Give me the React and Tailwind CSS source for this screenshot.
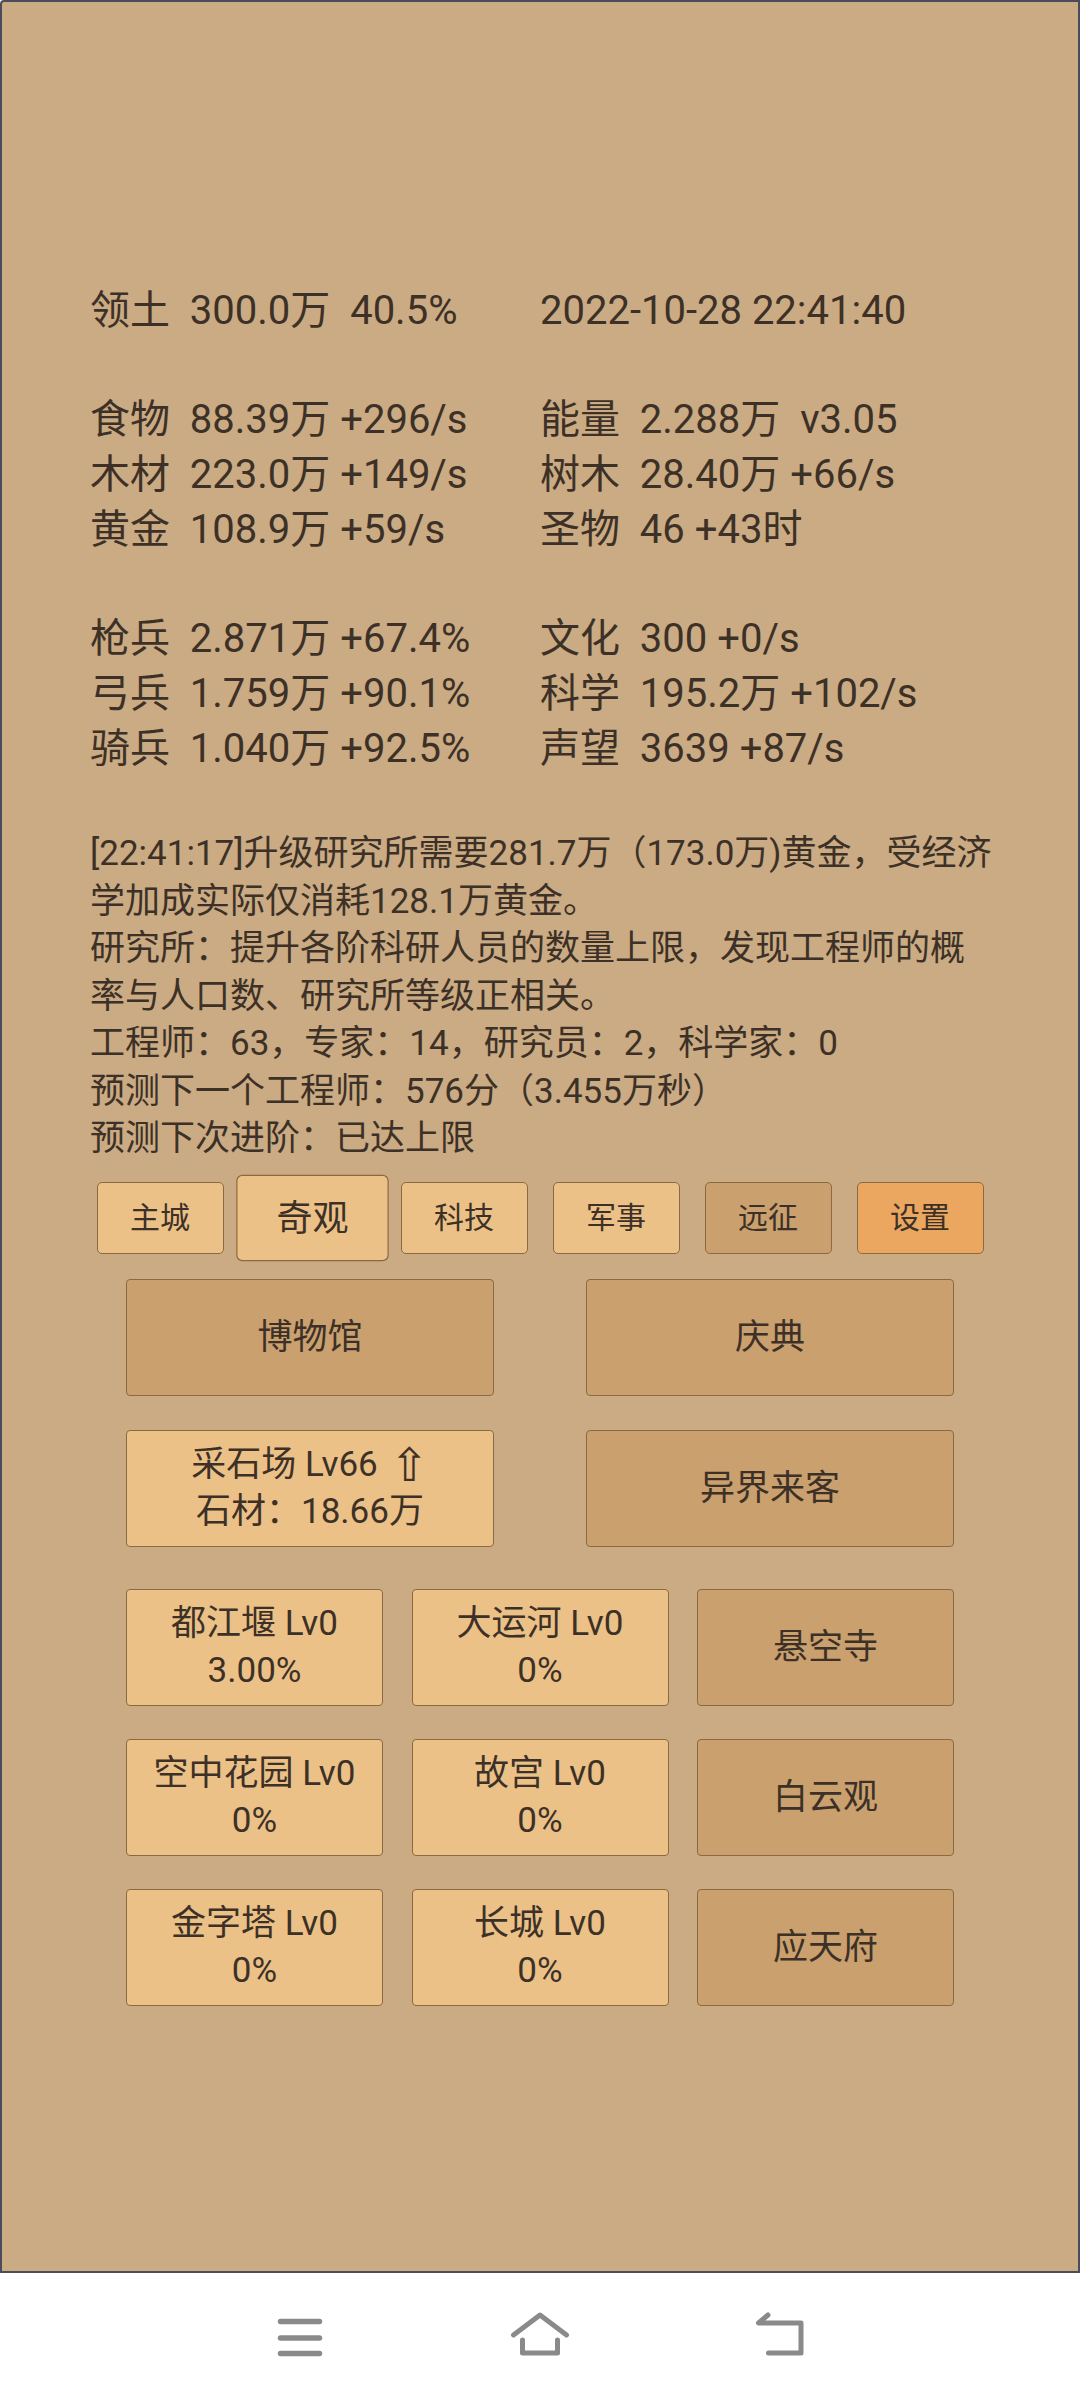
import React from 'react';

const statRows = [
  ['领土  300.0万  40.5%', '2022-10-28 22:41:40'],
  null,
  ['食物  88.39万 +296/s', '能量  2.288万  v3.05'],
  ['木材  223.0万 +149/s', '树木  28.40万 +66/s'],
  ['黄金  108.9万 +59/s', '圣物  46 +43时'],
  null,
  ['枪兵  2.871万 +67.4%', '文化  300 +0/s'],
  ['弓兵  1.759万 +90.1%', '科学  195.2万 +102/s'],
  ['骑兵  1.040万 +92.5%', '声望  3639 +87/s'],
];

const logLines = [
  '[22:41:17]升级研究所需要281.7万（173.0万)黄金，受经济',
  '学加成实际仅消耗128.1万黄金。',
  '研究所：提升各阶科研人员的数量上限，发现工程师的概',
  '率与人口数、研究所等级正相关。',
  '工程师：63，专家：14，研究员：2，科学家：0',
  '预测下一个工程师：576分（3.455万秒）',
  '预测下次进阶：已达上限',
];

const tabs = [
  { label: '主城', tone: 'light' },
  { label: '奇观', tone: 'light', active: true },
  { label: '科技', tone: 'light' },
  { label: '军事', tone: 'light' },
  { label: '远征', tone: 'dark' },
  { label: '设置', tone: 'orange' },
];

const tabTone = {
  light: 'bg-[#ebc187]',
  dark: 'bg-[#c9a06e]',
  orange: 'bg-[#eba75f]',
};

const wonders = [
  [
    { lines: ['都江堰 Lv0', '3.00%'] },
    { lines: ['大运河 Lv0', '0%'] },
    { lines: ['悬空寺'], dark: true },
  ],
  [
    { lines: ['空中花园 Lv0', '0%'] },
    { lines: ['故宫 Lv0', '0%'] },
    { lines: ['白云观'], dark: true },
  ],
  [
    { lines: ['金字塔 Lv0', '0%'] },
    { lines: ['长城 Lv0', '0%'] },
    { lines: ['应天府'], dark: true },
  ],
];

const Card = ({ width, dark, children }) => (
  <div
    className={`flex h-[117px] flex-col items-center justify-center rounded-[4px] border border-[#8b6a42] text-[35px] leading-[47px] ${width} ${
      dark ? 'bg-[#c9a06e]' : 'bg-[#ebc187]'
    }`}
  >
    {children}
  </div>
);

const NavIcons = () => (
  <div className="flex flex-1 items-center justify-center gap-[180px] pb-[4px]">
    <svg width="60" height="48" viewBox="0 0 60 48" fill="none" stroke="#8a8a8a" strokeWidth="5.5" strokeLinecap="round">
      <line x1="10.5" y1="10.5" x2="49.5" y2="10.5" />
      <line x1="10.5" y1="27" x2="49.5" y2="27" />
      <line x1="10.5" y1="42.5" x2="49.5" y2="42.5" />
    </svg>
    <svg width="60" height="48" viewBox="0 0 60 48" fill="none" stroke="#8a8a8a" strokeWidth="5" strokeLinecap="round" strokeLinejoin="round">
      <polyline points="3.5,24 30,4 56.5,24" />
      <polyline points="12.5,29 12.5,42 47.5,42 47.5,29" />
    </svg>
    <svg width="60" height="48" viewBox="0 0 60 48" fill="none" stroke="#8a8a8a" strokeWidth="5" strokeLinecap="round" strokeLinejoin="round">
      <polyline points="18,4 8.5,12 51,12 51,42 18.5,42" />
    </svg>
  </div>
);

export default function App() {
  return (
    <div className="flex h-[2400px] w-[1080px] flex-col bg-white font-['Roboto','Noto_Sans_CJK_SC',sans-serif] text-[#3d3127]">
      <div className="h-[2273px] rounded-tl-[4px] border-2 border-[#4a4c5a] bg-[#caab83]">
        <div className="mx-auto w-[900px] pt-[281px]">
          <div className="text-[40px] leading-[55px]">
            {statRows.map((row, i) =>
              row ? (
                <div key={i} className="grid grid-cols-2 whitespace-pre">
                  <span>{row[0]}</span>
                  <span>{row[1]}</span>
                </div>
              ) : (
                <div key={i} className="h-[54px]" />
              )
            )}
          </div>

          <div className="mt-[54px] text-[35px] leading-[47.5px]">
            {logLines.map((line) => (
              <div key={line} className="whitespace-nowrap">
                {line}
              </div>
            ))}
          </div>
        </div>

        <div className="mt-[19px] flex justify-center gap-[25px]">
          {tabs.map((tab) => (
            <div
              key={tab.label}
              className={`flex h-[72px] w-[127px] items-center justify-center rounded-[5px] border border-[#8b6a42] text-[30px] ${
                tabTone[tab.tone]
              } ${tab.active ? 'scale-[1.2]' : ''}`}
            >
              {tab.label}
            </div>
          ))}
        </div>

        <div className="mx-auto mt-[25px] flex w-[828px] flex-col">
          <div className="flex justify-between">
            <Card width="w-[368px]" dark>
              博物馆
            </Card>
            <Card width="w-[368px]" dark>
              庆典
            </Card>
          </div>

          <div className="mt-[34px] flex justify-between">
            <Card width="w-[368px]">
              <span className="flex items-center">
                采石场 Lv66
                <span className="ml-[12px] font-['DejaVu_Sans'] text-[46px] leading-none font-light">⇧</span>
              </span>
              <span>石材：18.66万</span>
            </Card>
            <Card width="w-[368px]" dark>
              异界来客
            </Card>
          </div>

          <div className="mt-[42px] flex flex-col gap-[33px]">
            {wonders.map((row, i) => (
              <div key={i} className="flex justify-between">
                {row.map((w) => (
                  <Card key={w.lines[0]} width="w-[257px]" dark={w.dark}>
                    {w.lines.map((l) => (
                      <span key={l}>{l}</span>
                    ))}
                  </Card>
                ))}
              </div>
            ))}
          </div>
        </div>
      </div>

      <NavIcons />
    </div>
  );
}
